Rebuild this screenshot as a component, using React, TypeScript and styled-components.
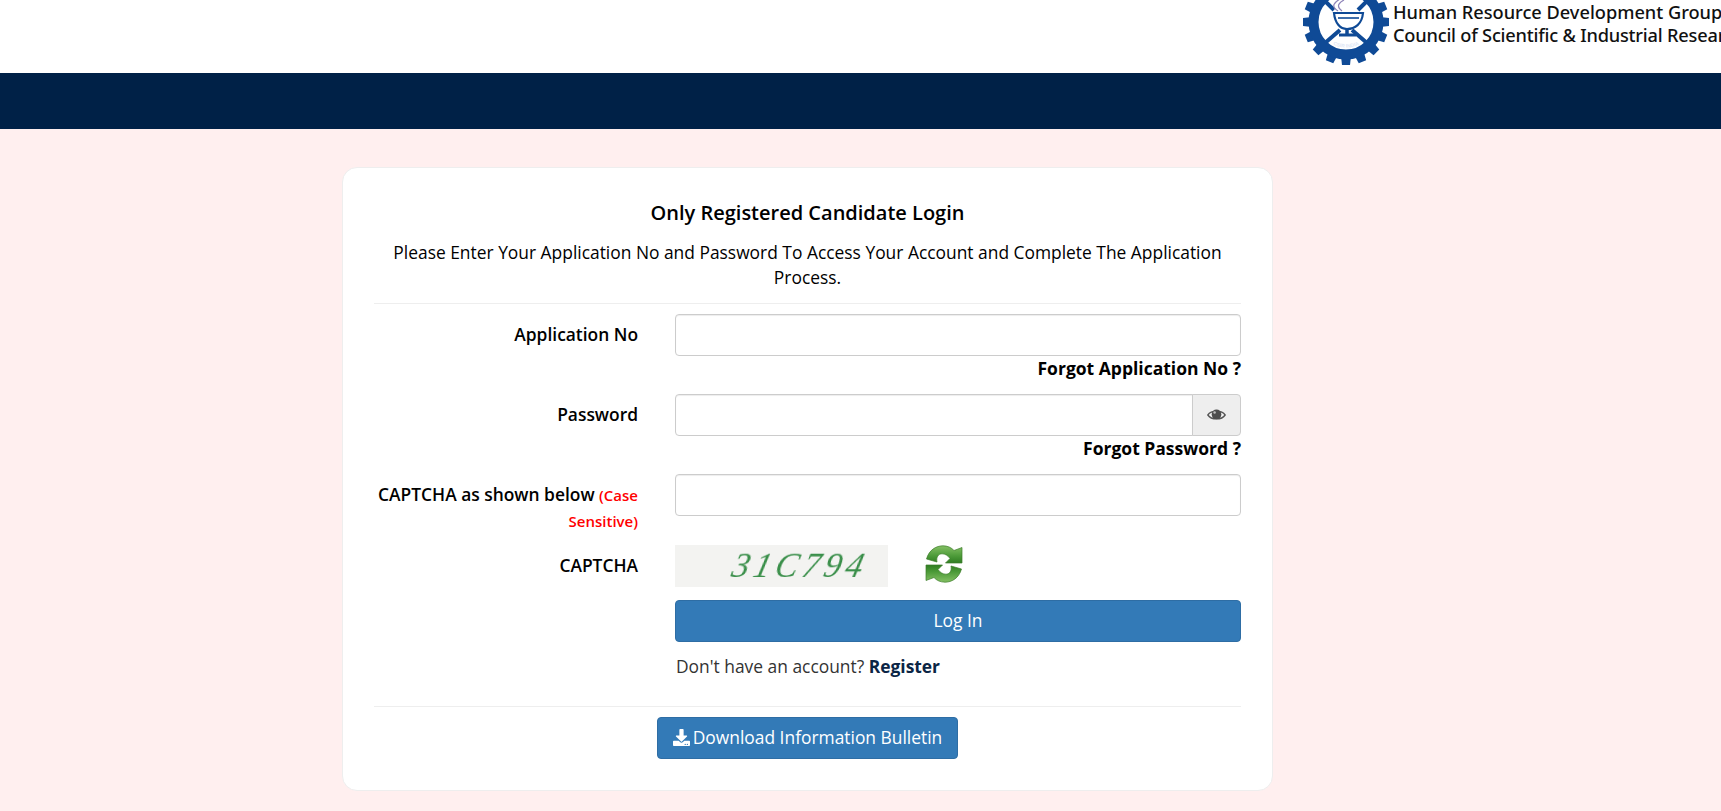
import React from "react";
import styled, { createGlobalStyle } from "styled-components";
import { FaDownload } from "react-icons/fa";

const Global = createGlobalStyle`
  html, body { margin: 0; padding: 0; background: #ffefef; }
  body { font-family: "Open Sans", "Liberation Sans", sans-serif; color: #000; overflow: hidden; }
  * { box-sizing: border-box; }
`;

const Page = styled.div`
  width: 1721px;
  height: 811px;
  overflow: hidden;
  display: flex;
  flex-direction: column;
`;

const Header = styled.header`
  height: 73px;
  background: #fff;
  display: flex;
  overflow: hidden;
  padding-left: 1302px;
`;

const Logo = styled.div`
  display: flex;
  flex: none;
  gap: 3px;
  align-items: flex-start;
`;

const Gear = styled.svg`
  width: 88px;
  height: 88px;
  margin-top: -22px;
  flex: none;
`;

const LogoText = styled.div`
  padding-top: 1px;
  font-family: "Noto Sans", "Open Sans", sans-serif;
  font-size: 18.2px;
  line-height: 23px;
  font-weight: 500;
  color: #111;
  white-space: nowrap;
`;

const LogoSubline = styled.span`
  letter-spacing: -0.2px;
`;

const NavBar = styled.div`
  height: 56px;
  background: #002147;
`;

const Main = styled.main`
  flex: 1;
  padding: 38px 0 0 342px;
`;

const Card = styled.section`
  width: 931px;
  height: 624px;
  background: #fff;
  border: 1px solid #eee;
  border-radius: 15px;
  padding: 30px 31px 0;
`;

const Title = styled.h4`
  margin: 0;
  font-size: 20px;
  line-height: 30px;
  font-weight: 600;
  text-align: center;
`;

const Intro = styled.p`
  margin: 12px 0 0;
  font-size: 17.4px;
  line-height: 25px;
  text-align: center;
`;

const Rule = styled.hr<{ $top: number }>`
  border: 0;
  border-top: 1px solid #eee;
  margin: ${(p) => p.$top}px 0 10px;
`;

const Row = styled.div<{ $mb?: number }>`
  display: grid;
  grid-template-columns: 264px 1fr;
  column-gap: 37px;
  margin-bottom: ${(p) => p.$mb ?? 0}px;
`;

const Label = styled.label`
  font-size: 17.4px;
  line-height: 26px;
  font-weight: 600;
  text-align: right;
  padding-top: 7px;
`;

const Sensitive = styled.span`
  color: #f00;
  font-size: 15px;
  line-height: 1;
`;

const Input = styled.input`
  display: block;
  width: 100%;
  height: 42px;
  border: 1px solid #ccc;
  border-radius: 4px;
  background: #fff;
  box-shadow: inset 0 1px 1px rgba(0, 0, 0, 0.075);
  outline: none;
  font: inherit;
`;

const InputGroup = styled.div`
  display: flex;
  height: 42px;
  ${Input} {
    flex: 1;
    border-radius: 4px 0 0 4px;
  }
`;

const Addon = styled.span`
  width: 49px;
  display: flex;
  align-items: center;
  justify-content: center;
  border: 1px solid #ccc;
  margin-left: -1px;
  border-radius: 0 4px 4px 0;
  background: #eee;
`;

const EyeSvg = styled.svg`
  width: 19px;
  height: 14px;
`;

const Forgot = styled.a`
  display: block;
  text-align: right;
  font-size: 17.5px;
  line-height: 24px;
  margin-bottom: 2px;
  font-weight: 700;
  color: #000;
`;

const CaptchaRow = styled.div`
  display: flex;
  align-items: flex-start;
  gap: 37px;
`;

const CaptchaImage = styled.div`
  width: 213px;
  height: 42px;
  background: #f3f3f1;
  padding-left: 58px;
  overflow: hidden;
`;

const CaptchaCode = styled.span`
  display: inline-block;
  font-family: "Liberation Serif", serif;
  font-style: italic;
  font-size: 34px;
  line-height: 41px;
  letter-spacing: 4.5px;
  color: #3a8f4a;
  white-space: nowrap;
  transform: skewX(-14deg);
  filter: blur(0.4px);
`;

const Refresh = styled.svg`
  width: 38px;
  height: 38px;
  flex: none;
`;

const PrimaryButton = styled.button<{ $block?: boolean }>`
  display: ${(p) => (p.$block ? "block" : "inline-flex")};
  align-items: center;
  gap: 3px;
  width: ${(p) => (p.$block ? "100%" : "auto")};
  height: 42px;
  padding: 0 15px 2px;
  border: 1px solid #2e6da4;
  border-radius: 4px;
  background: #337ab7;
  color: #fff;
  font: inherit;
  font-size: 17.4px;
`;

const AccountLine = styled.p`
  margin: 11px 0 0 1px;
  font-size: 17.4px;
  line-height: 26px;
  color: #333;
`;

const RegisterLink = styled.a`
  font-weight: 700;
  color: #0b2545;
`;

const Center = styled.div`
  display: flex;
  justify-content: center;
`;

const teeth = Array.from({ length: 16 }, (_, i) => (i * 360) / 16);

const CsirGear = () => (
  <Gear viewBox="0 0 88 88">
    <g fill="#0f4a96">
      {teeth.map((a) => (
        <path key={a} d="M39 10 L40 1 H48 L49 10 Z" transform={`rotate(${a} 44 44)`} />
      ))}
    </g>
    <circle cx="44" cy="44" r="32.5" fill="none" stroke="#0f4a96" strokeWidth="10" />
    <path id="csir-arc" d="M18 52 A28 28 0 0 0 70 52" fill="none" />
    <text fontSize="5" fontWeight="700" fill="#dfe8f5" fontFamily="Liberation Sans, sans-serif">
      <textPath href="#csir-arc" startOffset="50%" textAnchor="middle">
        CSIR INDIA
      </textPath>
    </text>
    <path d="M23 23 L32 32 M65 23 L56 32 M23 65 L38 52 M65 65 L50 52" stroke="#0f4a96" strokeWidth="4" />
    <path d="M32 35 H61 C60 46 53 51 45 51 C38 51 33 45 32 35 Z" fill="#fff" stroke="#0f4a96" strokeWidth="2.2" />
    <path d="M36 40 H57" stroke="#0f4a96" strokeWidth="1.6" />
    <path d="M45 51 V56" stroke="#0f4a96" strokeWidth="3.5" />
    <path d="M37 57 H54" stroke="#0f4a96" strokeWidth="3" />
    <path d="M36 33 C28 28 33 24 38 21 M40 33 C33 28 38 24 42 22" fill="none" stroke="#8d83b8" strokeWidth="1.2" />
  </Gear>
);

const arrow =
  "M1.5 14 C4 5 11 0.8 18 0.8 C22.5 0.8 26.5 2.6 29 5.5 L37 2.5 V18 H20.5 L25 13.5 C23 10.5 20 8.8 17 8.8 C13.5 8.8 11 12 12 17 Z";

const RefreshIcon = () => (
  <Refresh viewBox="0 0 38 38">
    <defs>
      <linearGradient id="rg" x1="0" y1="0" x2="0" y2="1">
        <stop offset="0" stopColor="#84c064" />
        <stop offset="0.6" stopColor="#4c9a38" />
        <stop offset="1" stopColor="#2f7d22" />
      </linearGradient>
    </defs>
    <path d={arrow} fill="url(#rg)" stroke="#3d7d2b" strokeWidth="0.7" />
    <path d={arrow} fill="url(#rg)" stroke="#3d7d2b" strokeWidth="0.7" transform="rotate(180 19 19)" />
  </Refresh>
);

const EyeIcon = () => (
  <EyeSvg viewBox="0 0 18 13">
    <path d="M0.8 6.5 C4 1.6 14 1.6 17.2 6.5 C14 11.4 4 11.4 0.8 6.5 Z" fill="#f4f4f4" stroke="#555" strokeWidth="1.3" />
    <circle cx="9" cy="6" r="4.6" fill="#4d4d4d" />
    <circle cx="7.2" cy="4.2" r="1.2" fill="#bbb" />
  </EyeSvg>
);

export default function App() {
  return (
    <Page>
      <Global />
      <Header>
        <Logo>
          <CsirGear />
          <LogoText>
            Human Resource Development Group
            <br />
            <LogoSubline>Council of Scientific &amp; Industrial Research</LogoSubline>
          </LogoText>
        </Logo>
      </Header>
      <NavBar />
      <Main>
        <Card>
          <Title>Only Registered Candidate Login</Title>
          <Intro>
            Please Enter Your Application No and Password To Access Your Account and Complete The Application Process.
          </Intro>
          <Rule $top={13} />
          <Row $mb={12}>
            <Label>Application No</Label>
            <div>
              <Input type="text" />
              <Forgot>Forgot Application No ?</Forgot>
            </div>
          </Row>
          <Row $mb={12}>
            <Label>Password</Label>
            <div>
              <InputGroup>
                <Input type="password" />
                <Addon>
                  <EyeIcon />
                </Addon>
              </InputGroup>
              <Forgot>Forgot Password ?</Forgot>
            </div>
          </Row>
          <Row $mb={12}>
            <Label>
              CAPTCHA as shown below <Sensitive>(Case Sensitive)</Sensitive>
            </Label>
            <Input type="text" />
          </Row>
          <Row $mb={13}>
            <Label>CAPTCHA</Label>
            <CaptchaRow>
              <CaptchaImage>
                <CaptchaCode>31C794</CaptchaCode>
              </CaptchaImage>
              <RefreshIcon />
            </CaptchaRow>
          </Row>
          <Row>
            <span />
            <div>
              <PrimaryButton $block>Log In</PrimaryButton>
              <AccountLine>
                Don't have an account? <RegisterLink>Register</RegisterLink>
              </AccountLine>
            </div>
          </Row>
          <Rule $top={27} />
          <Center>
            <PrimaryButton>
              <FaDownload size={17} />
              Download Information Bulletin
            </PrimaryButton>
          </Center>
        </Card>
      </Main>
    </Page>
  );
}
